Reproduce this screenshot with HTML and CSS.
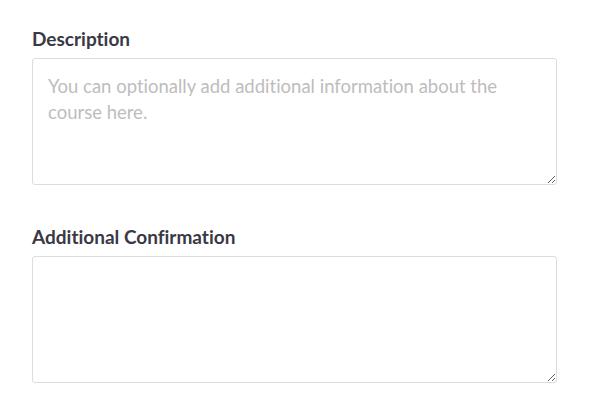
FILE: index.html
```html
<!DOCTYPE html>
<html>
<head>
<meta charset="utf-8">
<link rel="stylesheet" href="styles.css">
</head>
<body>
<form class="form">
  <div class="field">
    <label class="label" for="desc">Description</label>
    <textarea id="desc" class="input" placeholder="You can optionally add additional information about the course here."></textarea>
  </div>
  <div class="field">
    <label class="label" for="conf">Additional Confirmation</label>
    <textarea id="conf" class="input"></textarea>
  </div>
</form>
</body>
</html>
```
FILE: styles.css
```css
html, body {
  margin: 0;
  padding: 0;
  background: #fff;
}
body {
  font-family: Lato, "Open Sans", sans-serif;
  font-variant-ligatures: none;
}
.form {
  padding: 27px 0 0 32px;
  width: 525px;
  display: flex;
  flex-direction: column;
  gap: 40px;
}
.field {
  display: flex;
  flex-direction: column;
}
.label {
  font-weight: 700;
  font-size: 19px;
  line-height: 24px;
  color: #393946;
  margin-bottom: 7px;
}
.input {
  box-sizing: border-box;
  width: 525px;
  height: 127px;
  border: 1px solid #dcdcdc;
  border-radius: 3px;
  padding: 14px 15px 12px;
  font-family: Lato, sans-serif;
  font-variant-ligatures: none;
  font-size: 18.5px;
  line-height: 26px;
  color: #333;
  resize: vertical;
  outline: none;
  margin: 0;
}
.input::placeholder {
  color: #bdbdbd;
}
```
